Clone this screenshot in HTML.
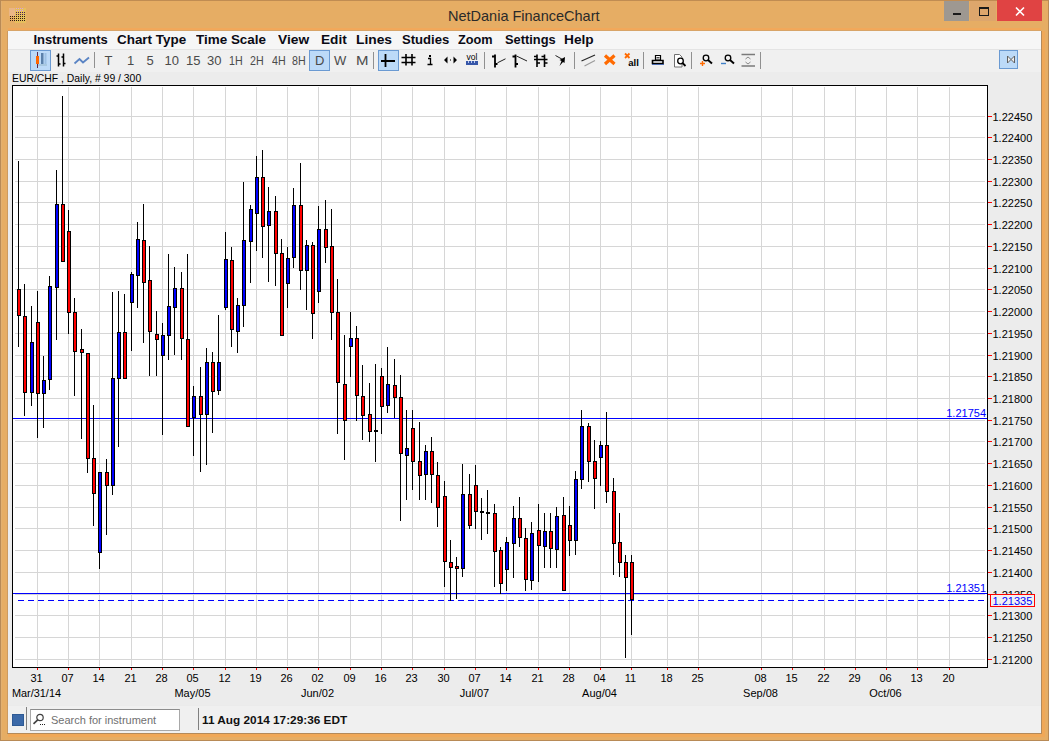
<!DOCTYPE html>
<html><head><meta charset="utf-8"><style>
html,body{margin:0;padding:0;}
body{width:1049px;height:741px;position:relative;overflow:hidden;background:#E6AD64;font-family:"Liberation Sans", sans-serif;}
.abs{position:absolute;}
.btn{background:#BCDAF8;border:1px solid #6A9AD2;}
.m{position:absolute;top:32px;font-size:13px;transform-origin:0 0;font-weight:bold;color:#0A0A14;line-height:16px;white-space:nowrap;}
.tt{position:absolute;top:53px;font-size:13px;color:#4A4A4A;transform-origin:0 0;line-height:15px;white-space:nowrap;}
svg text{font-family:"Liberation Sans", sans-serif;}
</style></head><body>
<div class="abs" style="left:0;top:0;width:1049px;height:1px;background:#C08C52"></div>
<div class="abs" style="left:0;top:0;width:1px;height:741px;background:#B88A56"></div>
<div class="abs" style="left:1px;top:1px;width:1px;height:740px;background:#E2B070"></div>
<div class="abs" style="left:1048px;top:0;width:1px;height:741px;background:#B88A56"></div>
<div class="abs" style="left:0;top:740px;width:1049px;height:1px;background:#B88A56"></div>
<div class="abs" style="left:7px;top:31px;width:1px;height:703px;background:#CC9A60"></div>
<div class="abs" style="left:1041px;top:31px;width:1px;height:703px;background:#B48A5A"></div>
<div class="abs" style="left:1042px;top:31px;width:3px;height:705px;background:#F0A858"></div>
<div class="abs" style="left:7px;top:733px;width:1035px;height:1px;background:#B48A5A"></div>
<div class="abs" style="left:8px;top:734px;width:1037px;height:3px;background:#F0A858"></div>
<div class="abs" style="left:8px;top:28px;width:1033px;height:2px;background:#F2A85A"></div>
<div class="abs" style="left:8px;top:30px;width:1033px;height:1px;background:#D8A468"></div>
<div class="abs" style="left:0;top:0;width:1049px;height:31px;">
  <span class="abs" style="left:448px;top:7px;font-size:14.5px;color:#2A2A2A;line-height:18px;white-space:nowrap">NetDania FinanceChart</span>
</div>
<!-- app icon -->
<svg class="abs" style="left:0;top:0" width="40" height="30">
  <rect x="15" y="8" width="11" height="15" fill="#E6C45A" opacity="0.7"/>
  <rect x="9" y="8" width="6" height="8" fill="#EBB890" opacity="0.8"/>
  <g fill="#2E1C12">
  <rect x="10" y="16" width="1" height="1"/><rect x="10" y="18" width="1" height="1"/><rect x="10" y="20" width="1" height="1"/><rect x="12" y="16" width="1" height="1"/><rect x="12" y="18" width="1" height="1"/><rect x="12" y="20" width="1" height="1"/><rect x="14" y="16" width="1" height="1"/><rect x="14" y="18" width="1" height="1"/><rect x="14" y="20" width="1" height="1"/><rect x="16" y="16" width="1" height="1"/><rect x="16" y="18" width="1" height="1"/><rect x="16" y="20" width="1" height="1"/><rect x="18" y="16" width="1" height="1"/><rect x="18" y="18" width="1" height="1"/><rect x="18" y="20" width="1" height="1"/><rect x="20" y="16" width="1" height="1"/><rect x="20" y="18" width="1" height="1"/><rect x="20" y="20" width="1" height="1"/><rect x="22" y="16" width="1" height="1"/><rect x="22" y="18" width="1" height="1"/><rect x="22" y="20" width="1" height="1"/><rect x="24" y="16" width="1" height="1"/><rect x="24" y="18" width="1" height="1"/><rect x="24" y="20" width="1" height="1"/>
  </g>
  <g fill="#4A2050">
  <rect x="16" y="12" width="1" height="1"/><rect x="16" y="14" width="1" height="1"/><rect x="18" y="12" width="1" height="1"/><rect x="18" y="14" width="1" height="1"/><rect x="20" y="12" width="1" height="1"/><rect x="20" y="14" width="1" height="1"/><rect x="22" y="12" width="1" height="1"/><rect x="22" y="14" width="1" height="1"/><rect x="24" y="12" width="1" height="1"/><rect x="24" y="14" width="1" height="1"/>
  </g>
  <g fill="#D8A0E8">
  <rect x="16" y="8" width="1" height="1"/><rect x="16" y="10" width="1" height="1"/><rect x="18" y="8" width="1" height="1"/><rect x="18" y="10" width="1" height="1"/><rect x="20" y="8" width="1" height="1"/><rect x="20" y="10" width="1" height="1"/><rect x="22" y="8" width="1" height="1"/><rect x="22" y="10" width="1" height="1"/>
  </g>
</svg>
<!-- title buttons -->
<div class="abs" style="left:944px;top:1px;width:25px;height:20px;background:#9E9891"></div>
<div class="abs" style="left:953px;top:13px;width:8px;height:2px;background:#1A1A1A"></div>
<div class="abs" style="left:970px;top:1px;width:26px;height:20px;background:#DDA66C"></div>
<div class="abs" style="left:979px;top:7px;width:8px;height:6px;border:1px solid #1A1A1A;border-top-width:2px"></div>
<div class="abs" style="left:997px;top:0px;width:45px;height:21px;background:#E04343"></div>
<svg class="abs" style="left:997px;top:0" width="45" height="21"><path d="M19 7.5l8 8M27 7.5l-8 8" stroke="#FFF" stroke-width="1.6"/></svg>
<!-- client -->
<div class="abs" style="left:8px;top:31px;width:1033px;height:702px;background:#F0F0F0"></div>
<div class="abs" style="left:8px;top:31px;width:1033px;height:18px;background:#F6F6F6"></div>
<div class="abs" style="left:8px;top:49px;width:1033px;height:1px;background:#E4E4E4"></div>
<div class="abs" style="left:8px;top:72px;width:1033px;height:633px;background:#ECECEC"></div>
<div class="abs" style="left:8px;top:705px;width:1033px;height:1px;background:#EBEBEB"></div>

<div class="abs btn" style="left:30px;top:50px;width:19px;height:19px"></div>
<div class="abs btn" style="left:309px;top:50px;width:19px;height:19px"></div>
<div class="abs btn" style="left:378px;top:50px;width:19px;height:19px"></div>
<div class="abs btn" style="left:999px;top:50px;width:17px;height:17px"></div>

<span class="m" style="left:33.4px;transform:scaleX(1.0)">Instruments</span><span class="m" style="left:116.7px;transform:scaleX(1.033)">Chart Type</span><span class="m" style="left:195.7px;transform:scaleX(1.035)">Time Scale</span><span class="m" style="left:278.3px;transform:scaleX(1.058)">View</span><span class="m" style="left:321.0px;transform:scaleX(1.049)">Edit</span><span class="m" style="left:356.3px;transform:scaleX(1.061)">Lines</span><span class="m" style="left:402.3px;transform:scaleX(1.008)">Studies</span><span class="m" style="left:458.3px;transform:scaleX(0.977)">Zoom</span><span class="m" style="left:504.7px;transform:scaleX(0.989)">Settings</span><span class="m" style="left:564.3px;transform:scaleX(1.052)">Help</span>
<span class="tt" style="left:104.5px;transform:scaleX(1)">T</span><span class="tt" style="left:127px;transform:scaleX(1)">1</span><span class="tt" style="left:146.5px;transform:scaleX(1)">5</span><span class="tt" style="left:164.5px;transform:scaleX(1)">10</span><span class="tt" style="left:186px;transform:scaleX(1)">15</span><span class="tt" style="left:207px;transform:scaleX(1)">30</span><span class="tt" style="left:229px;transform:scaleX(0.82)">1H</span><span class="tt" style="left:249.5px;transform:scaleX(0.82)">2H</span><span class="tt" style="left:271.5px;transform:scaleX(0.82)">4H</span><span class="tt" style="left:291.5px;transform:scaleX(0.82)">8H</span><span class="tt" style="left:315px;transform:scaleX(1)">D</span><span class="tt" style="left:334px;transform:scaleX(1)">W</span><span class="tt" style="left:355.8px;transform:scaleX(1.15)">M</span>
<svg class="abs" style="left:0;top:0" width="1049" height="90">
<!-- selected candle button -->
<path d="M37.5 52v16" stroke="#5A2A50" stroke-width="1"/>
<rect x="36" y="56" width="3" height="8" fill="#FF6600"/>
<rect x="41" y="53" width="2.5" height="11" fill="#5A80AA"/>
<rect x="44.5" y="53" width="2" height="11" fill="#9CC0E4"/>
<rect x="38" y="64" width="9" height="2" fill="#A8C8E0"/>
<!-- bar icon (OHLC pair) -->
<path d="M58.5 53.5v13M56.5 56h2M58.5 64h2M63.5 53.5v13M61.5 57h2M63.5 63.5h2" stroke="#000" stroke-width="1.5" fill="none"/>
<!-- line icon -->
<path d="M74.5 63.5l5-4.5 3.5 3.5 6-5" stroke="#5A84C4" stroke-width="1.8" fill="none"/>
<rect x="94" y="52" width="1" height="16" fill="#909090"/>
<rect x="373" y="52" width="1" height="17" fill="#909090"/>
<!-- crosshair -->
<path d="M381 61h14M385.5 54v13" stroke="#000" stroke-width="1.8" fill="none"/>
<!-- hash -->
<path d="M406 54v11.5M412 54v11.5M401.5 57.5h14M401.5 62.5h14" stroke="#000" stroke-width="1.6" fill="none"/>
<!-- i -->
<rect x="429" y="55" width="2" height="2" fill="#000"/>
<path d="M428 58.5h2.5v5.5M427.5 64.5h5" stroke="#000" stroke-width="1.3" fill="none"/>
<!-- arrows -->
<path d="M444 60l3.5-3.5v7zM457 60l-3.5-3.5v7z" fill="#000"/>
<rect x="450" y="59" width="1" height="2" fill="#707070"/>
<!-- vol -->
<text x="472" y="59.5" text-anchor="middle" font-size="8.5" fill="#000">vol</text>
<path d="M466 61h12v4h-12z" fill="#3656A8"/>
<path d="M468.5 61v2M471.5 61v2M474.5 61v2" stroke="#B8C8F0" stroke-width="1"/>
<rect x="484" y="52" width="1" height="17" fill="#909090"/>
<!-- trendline icons -->
<path d="M495 54.5v13M492 56.5h3M495 64h2.5" stroke="#000" stroke-width="1.8" fill="none"/>
<path d="M497.5 62.8l8-4" stroke="#202020" stroke-width="1" fill="none"/>
<path d="M515.5 54.5v13M512.5 56.5h3M515.5 64h2.5" stroke="#000" stroke-width="1.8" fill="none"/>
<path d="M516.5 56l10.5 5" stroke="#202020" stroke-width="1" fill="none"/>
<path d="M537 54.5v12.5M544.5 54.5v12.5M534 56.5h3M541.5 56.5h3M534 59.5h13.5M537 63h3M544.5 63h3" stroke="#000" stroke-width="1.6" fill="none"/>
<path d="M555.5 55.5l8 4.5" stroke="#202020" stroke-width="1" fill="none"/>
<path d="M559.5 66l2-5-2-1 5.5-3-0.5 6-1.5-1z" fill="#000"/>
<rect x="574" y="52" width="1" height="17" fill="#909090"/>
<path d="M581.5 61l13.5-6" stroke="#282828" stroke-width="1.2" fill="none"/>
<path d="M584.5 66l10.5-5.5" stroke="#9A9A9A" stroke-width="1.2" fill="none"/>
<!-- orange X -->
<path d="M605 55.5l9.5 8.5M614.5 55.5l-9.5 8.5" stroke="#FF6A00" stroke-width="3.2" fill="none"/>
<path d="M625 53.5l4.5 4.5M629.5 53.5l-4.5 4.5" stroke="#FF6A00" stroke-width="1.8" fill="none"/>
<text x="628.3" y="65.5" font-size="9.5" font-weight="bold" fill="#000">all</text>
<rect x="643" y="52" width="1" height="17" fill="#909090"/>
<!-- printer -->
<path d="M655.5 55.5h5v4.5h-5z" stroke="#000" stroke-width="1.2" fill="#fff"/>
<path d="M656.5 57.8h3" stroke="#000" stroke-width="1"/>
<path d="M652.5 60.5h10.5v3h-10.5z" stroke="#000" stroke-width="1.6" fill="#fff"/>
<rect x="652" y="64" width="12" height="1" fill="#4A6AB0"/>
<!-- print preview -->
<path d="M674.5 54.5h5l2.5 2.5v10h-7.5z" stroke="#707070" stroke-width="1" fill="#fff"/>
<circle cx="680.5" cy="61" r="2.8" stroke="#000" stroke-width="1.3" fill="#fff"/>
<path d="M682.5 63l3 3" stroke="#000" stroke-width="1.8"/>
<rect x="691" y="52" width="1" height="17" fill="#909090"/>
<!-- zoom in -->
<circle cx="706" cy="58" r="2.8" stroke="#000" stroke-width="1.3" fill="none"/>
<path d="M708 60l4 3.5" stroke="#000" stroke-width="1.9"/>
<path d="M702.5 61v5M700 63.5h5" stroke="#FF6A00" stroke-width="1.4"/>
<!-- zoom out -->
<circle cx="728" cy="58" r="2.8" stroke="#000" stroke-width="1.3" fill="none"/>
<path d="M730 60l4 3.5" stroke="#000" stroke-width="1.9"/>
<path d="M721 63.5h5" stroke="#4080C8" stroke-width="1.4"/>
<!-- fit -->
<path d="M741.5 54.5h13.5M741.5 66h13.5" stroke="#7A7A7A" stroke-width="1.7"/>
<path d="M745.5 59l2.5-2 2.5 2M745.5 62l2.5 2 2.5-2" stroke="#8A8A8A" stroke-width="1" fill="none"/>
<rect x="760" y="52" width="1" height="17" fill="#909090"/>
<!-- right button icon -->
<path d="M1007.5 56v7l3.5-3.5zM1014.5 56v7l-3.5-3.5z" stroke="#606060" stroke-width="1" fill="#F0F0F0"/>
</svg>
<span class="abs" style="left:12px;top:72px;font-size:10.4px;color:#000;line-height:13px;white-space:nowrap">EUR/CHF , Daily, # 99 / 300</span>
<svg class="abs" style="left:0;top:0" width="1049" height="705" shape-rendering="crispEdges">
<rect x="12" y="85" width="976" height="583" fill="#FFFFFF"/>
<rect x="15" y="116" width="970" height="1" fill="#D6D6D6"/>
<rect x="15" y="137" width="970" height="1" fill="#D6D6D6"/>
<rect x="15" y="159" width="970" height="1" fill="#D6D6D6"/>
<rect x="15" y="181" width="970" height="1" fill="#D6D6D6"/>
<rect x="15" y="202" width="970" height="1" fill="#D6D6D6"/>
<rect x="15" y="224" width="970" height="1" fill="#D6D6D6"/>
<rect x="15" y="246" width="970" height="1" fill="#D6D6D6"/>
<rect x="15" y="268" width="970" height="1" fill="#D6D6D6"/>
<rect x="15" y="289" width="970" height="1" fill="#D6D6D6"/>
<rect x="15" y="311" width="970" height="1" fill="#D6D6D6"/>
<rect x="15" y="333" width="970" height="1" fill="#D6D6D6"/>
<rect x="15" y="355" width="970" height="1" fill="#D6D6D6"/>
<rect x="15" y="376" width="970" height="1" fill="#D6D6D6"/>
<rect x="15" y="398" width="970" height="1" fill="#D6D6D6"/>
<rect x="15" y="420" width="970" height="1" fill="#D6D6D6"/>
<rect x="15" y="441" width="970" height="1" fill="#D6D6D6"/>
<rect x="15" y="463" width="970" height="1" fill="#D6D6D6"/>
<rect x="15" y="485" width="970" height="1" fill="#D6D6D6"/>
<rect x="15" y="507" width="970" height="1" fill="#D6D6D6"/>
<rect x="15" y="528" width="970" height="1" fill="#D6D6D6"/>
<rect x="15" y="550" width="970" height="1" fill="#D6D6D6"/>
<rect x="15" y="572" width="970" height="1" fill="#D6D6D6"/>
<rect x="15" y="594" width="970" height="1" fill="#D6D6D6"/>
<rect x="15" y="615" width="970" height="1" fill="#D6D6D6"/>
<rect x="15" y="637" width="970" height="1" fill="#D6D6D6"/>
<rect x="15" y="659" width="970" height="1" fill="#D6D6D6"/>
<rect x="37" y="87" width="1" height="579" fill="#D6D6D6"/>
<rect x="68" y="87" width="1" height="579" fill="#D6D6D6"/>
<rect x="99" y="87" width="1" height="579" fill="#D6D6D6"/>
<rect x="131" y="87" width="1" height="579" fill="#D6D6D6"/>
<rect x="162" y="87" width="1" height="579" fill="#D6D6D6"/>
<rect x="193" y="87" width="1" height="579" fill="#D6D6D6"/>
<rect x="225" y="87" width="1" height="579" fill="#D6D6D6"/>
<rect x="256" y="87" width="1" height="579" fill="#D6D6D6"/>
<rect x="287" y="87" width="1" height="579" fill="#D6D6D6"/>
<rect x="318" y="87" width="1" height="579" fill="#D6D6D6"/>
<rect x="350" y="87" width="1" height="579" fill="#D6D6D6"/>
<rect x="381" y="87" width="1" height="579" fill="#D6D6D6"/>
<rect x="412" y="87" width="1" height="579" fill="#D6D6D6"/>
<rect x="444" y="87" width="1" height="579" fill="#D6D6D6"/>
<rect x="475" y="87" width="1" height="579" fill="#D6D6D6"/>
<rect x="506" y="87" width="1" height="579" fill="#D6D6D6"/>
<rect x="538" y="87" width="1" height="579" fill="#D6D6D6"/>
<rect x="569" y="87" width="1" height="579" fill="#D6D6D6"/>
<rect x="600" y="87" width="1" height="579" fill="#D6D6D6"/>
<rect x="631" y="87" width="1" height="579" fill="#D6D6D6"/>
<rect x="667" y="87" width="1" height="579" fill="#D6D6D6"/>
<rect x="698" y="87" width="1" height="579" fill="#D6D6D6"/>
<rect x="761" y="87" width="1" height="579" fill="#D6D6D6"/>
<rect x="792" y="87" width="1" height="579" fill="#D6D6D6"/>
<rect x="824" y="87" width="1" height="579" fill="#D6D6D6"/>
<rect x="855" y="87" width="1" height="579" fill="#D6D6D6"/>
<rect x="886" y="87" width="1" height="579" fill="#D6D6D6"/>
<rect x="917" y="87" width="1" height="579" fill="#D6D6D6"/>
<rect x="949" y="87" width="1" height="579" fill="#D6D6D6"/>
<rect x="13" y="418" width="974" height="1" fill="#0000FF"/>
<rect x="13" y="593" width="974" height="1" fill="#0000FF"/>
<rect x="18" y="600" width="6" height="1" fill="#0000FF"/>
<rect x="28" y="600" width="6" height="1" fill="#0000FF"/>
<rect x="38" y="600" width="6" height="1" fill="#0000FF"/>
<rect x="48" y="600" width="6" height="1" fill="#0000FF"/>
<rect x="58" y="600" width="6" height="1" fill="#0000FF"/>
<rect x="68" y="600" width="6" height="1" fill="#0000FF"/>
<rect x="78" y="600" width="6" height="1" fill="#0000FF"/>
<rect x="88" y="600" width="6" height="1" fill="#0000FF"/>
<rect x="98" y="600" width="6" height="1" fill="#0000FF"/>
<rect x="108" y="600" width="6" height="1" fill="#0000FF"/>
<rect x="118" y="600" width="6" height="1" fill="#0000FF"/>
<rect x="128" y="600" width="6" height="1" fill="#0000FF"/>
<rect x="138" y="600" width="6" height="1" fill="#0000FF"/>
<rect x="148" y="600" width="6" height="1" fill="#0000FF"/>
<rect x="158" y="600" width="6" height="1" fill="#0000FF"/>
<rect x="168" y="600" width="6" height="1" fill="#0000FF"/>
<rect x="178" y="600" width="6" height="1" fill="#0000FF"/>
<rect x="188" y="600" width="6" height="1" fill="#0000FF"/>
<rect x="198" y="600" width="6" height="1" fill="#0000FF"/>
<rect x="208" y="600" width="6" height="1" fill="#0000FF"/>
<rect x="218" y="600" width="6" height="1" fill="#0000FF"/>
<rect x="228" y="600" width="6" height="1" fill="#0000FF"/>
<rect x="238" y="600" width="6" height="1" fill="#0000FF"/>
<rect x="248" y="600" width="6" height="1" fill="#0000FF"/>
<rect x="258" y="600" width="6" height="1" fill="#0000FF"/>
<rect x="268" y="600" width="6" height="1" fill="#0000FF"/>
<rect x="278" y="600" width="6" height="1" fill="#0000FF"/>
<rect x="288" y="600" width="6" height="1" fill="#0000FF"/>
<rect x="298" y="600" width="6" height="1" fill="#0000FF"/>
<rect x="308" y="600" width="6" height="1" fill="#0000FF"/>
<rect x="318" y="600" width="6" height="1" fill="#0000FF"/>
<rect x="328" y="600" width="6" height="1" fill="#0000FF"/>
<rect x="338" y="600" width="6" height="1" fill="#0000FF"/>
<rect x="348" y="600" width="6" height="1" fill="#0000FF"/>
<rect x="358" y="600" width="6" height="1" fill="#0000FF"/>
<rect x="368" y="600" width="6" height="1" fill="#0000FF"/>
<rect x="378" y="600" width="6" height="1" fill="#0000FF"/>
<rect x="388" y="600" width="6" height="1" fill="#0000FF"/>
<rect x="398" y="600" width="6" height="1" fill="#0000FF"/>
<rect x="408" y="600" width="6" height="1" fill="#0000FF"/>
<rect x="418" y="600" width="6" height="1" fill="#0000FF"/>
<rect x="428" y="600" width="6" height="1" fill="#0000FF"/>
<rect x="438" y="600" width="6" height="1" fill="#0000FF"/>
<rect x="448" y="600" width="6" height="1" fill="#0000FF"/>
<rect x="458" y="600" width="6" height="1" fill="#0000FF"/>
<rect x="468" y="600" width="6" height="1" fill="#0000FF"/>
<rect x="478" y="600" width="6" height="1" fill="#0000FF"/>
<rect x="488" y="600" width="6" height="1" fill="#0000FF"/>
<rect x="498" y="600" width="6" height="1" fill="#0000FF"/>
<rect x="508" y="600" width="6" height="1" fill="#0000FF"/>
<rect x="518" y="600" width="6" height="1" fill="#0000FF"/>
<rect x="528" y="600" width="6" height="1" fill="#0000FF"/>
<rect x="538" y="600" width="6" height="1" fill="#0000FF"/>
<rect x="548" y="600" width="6" height="1" fill="#0000FF"/>
<rect x="558" y="600" width="6" height="1" fill="#0000FF"/>
<rect x="568" y="600" width="6" height="1" fill="#0000FF"/>
<rect x="578" y="600" width="6" height="1" fill="#0000FF"/>
<rect x="588" y="600" width="6" height="1" fill="#0000FF"/>
<rect x="598" y="600" width="6" height="1" fill="#0000FF"/>
<rect x="608" y="600" width="6" height="1" fill="#0000FF"/>
<rect x="618" y="600" width="6" height="1" fill="#0000FF"/>
<rect x="628" y="600" width="6" height="1" fill="#0000FF"/>
<rect x="638" y="600" width="6" height="1" fill="#0000FF"/>
<rect x="648" y="600" width="6" height="1" fill="#0000FF"/>
<rect x="658" y="600" width="6" height="1" fill="#0000FF"/>
<rect x="668" y="600" width="6" height="1" fill="#0000FF"/>
<rect x="678" y="600" width="6" height="1" fill="#0000FF"/>
<rect x="688" y="600" width="6" height="1" fill="#0000FF"/>
<rect x="698" y="600" width="6" height="1" fill="#0000FF"/>
<rect x="708" y="600" width="6" height="1" fill="#0000FF"/>
<rect x="718" y="600" width="6" height="1" fill="#0000FF"/>
<rect x="728" y="600" width="6" height="1" fill="#0000FF"/>
<rect x="738" y="600" width="6" height="1" fill="#0000FF"/>
<rect x="748" y="600" width="6" height="1" fill="#0000FF"/>
<rect x="758" y="600" width="6" height="1" fill="#0000FF"/>
<rect x="768" y="600" width="6" height="1" fill="#0000FF"/>
<rect x="778" y="600" width="6" height="1" fill="#0000FF"/>
<rect x="788" y="600" width="6" height="1" fill="#0000FF"/>
<rect x="798" y="600" width="6" height="1" fill="#0000FF"/>
<rect x="808" y="600" width="6" height="1" fill="#0000FF"/>
<rect x="818" y="600" width="6" height="1" fill="#0000FF"/>
<rect x="828" y="600" width="6" height="1" fill="#0000FF"/>
<rect x="838" y="600" width="6" height="1" fill="#0000FF"/>
<rect x="848" y="600" width="6" height="1" fill="#0000FF"/>
<rect x="858" y="600" width="6" height="1" fill="#0000FF"/>
<rect x="868" y="600" width="6" height="1" fill="#0000FF"/>
<rect x="878" y="600" width="6" height="1" fill="#0000FF"/>
<rect x="888" y="600" width="6" height="1" fill="#0000FF"/>
<rect x="898" y="600" width="6" height="1" fill="#0000FF"/>
<rect x="908" y="600" width="6" height="1" fill="#0000FF"/>
<rect x="918" y="600" width="6" height="1" fill="#0000FF"/>
<rect x="928" y="600" width="6" height="1" fill="#0000FF"/>
<rect x="938" y="600" width="6" height="1" fill="#0000FF"/>
<rect x="948" y="600" width="6" height="1" fill="#0000FF"/>
<rect x="958" y="600" width="6" height="1" fill="#0000FF"/>
<rect x="968" y="600" width="6" height="1" fill="#0000FF"/>
<rect x="978" y="600" width="6" height="1" fill="#0000FF"/>
<rect x="18" y="161" width="1" height="186" fill="#000"/>
<rect x="17" y="289" width="4" height="27" fill="#000"/>
<rect x="18" y="290" width="2" height="25" fill="#FF0000"/>
<rect x="24" y="284" width="1" height="132" fill="#000"/>
<rect x="23" y="316" width="4" height="77" fill="#000"/>
<rect x="24" y="317" width="2" height="75" fill="#FF0000"/>
<rect x="31" y="306" width="1" height="100" fill="#000"/>
<rect x="30" y="342" width="4" height="51" fill="#000"/>
<rect x="31" y="343" width="2" height="49" fill="#0000FF"/>
<rect x="37" y="291" width="1" height="147" fill="#000"/>
<rect x="36" y="322" width="4" height="72" fill="#000"/>
<rect x="37" y="323" width="2" height="70" fill="#FF0000"/>
<rect x="43" y="356" width="1" height="72" fill="#000"/>
<rect x="42" y="380" width="4" height="14" fill="#000"/>
<rect x="43" y="381" width="2" height="12" fill="#0000FF"/>
<rect x="49" y="276" width="1" height="114" fill="#000"/>
<rect x="48" y="286" width="4" height="94" fill="#000"/>
<rect x="49" y="287" width="2" height="92" fill="#0000FF"/>
<rect x="56" y="170" width="1" height="170" fill="#000"/>
<rect x="55" y="204" width="4" height="84" fill="#000"/>
<rect x="56" y="205" width="2" height="82" fill="#0000FF"/>
<rect x="62" y="96" width="1" height="166" fill="#000"/>
<rect x="61" y="204" width="4" height="58" fill="#000"/>
<rect x="62" y="205" width="2" height="56" fill="#FF0000"/>
<rect x="68" y="210" width="1" height="124" fill="#000"/>
<rect x="67" y="231" width="4" height="82" fill="#000"/>
<rect x="68" y="232" width="2" height="80" fill="#FF0000"/>
<rect x="74" y="298" width="1" height="98" fill="#000"/>
<rect x="73" y="312" width="4" height="40" fill="#000"/>
<rect x="74" y="313" width="2" height="38" fill="#FF0000"/>
<rect x="81" y="329" width="1" height="110" fill="#000"/>
<rect x="80" y="349" width="4" height="4" fill="#000"/>
<rect x="81" y="350" width="2" height="2" fill="#FF0000"/>
<rect x="87" y="353" width="1" height="120" fill="#000"/>
<rect x="86" y="353" width="4" height="106" fill="#000"/>
<rect x="87" y="354" width="2" height="104" fill="#FF0000"/>
<rect x="93" y="405" width="1" height="121" fill="#000"/>
<rect x="92" y="458" width="4" height="36" fill="#000"/>
<rect x="93" y="459" width="2" height="34" fill="#FF0000"/>
<rect x="99" y="472" width="1" height="97" fill="#000"/>
<rect x="98" y="472" width="4" height="81" fill="#000"/>
<rect x="99" y="473" width="2" height="79" fill="#0000FF"/>
<rect x="106" y="459" width="1" height="76" fill="#000"/>
<rect x="105" y="472" width="4" height="14" fill="#000"/>
<rect x="106" y="473" width="2" height="12" fill="#FF0000"/>
<rect x="112" y="292" width="1" height="203" fill="#000"/>
<rect x="111" y="378" width="4" height="108" fill="#000"/>
<rect x="112" y="379" width="2" height="106" fill="#0000FF"/>
<rect x="118" y="291" width="1" height="156" fill="#000"/>
<rect x="117" y="332" width="4" height="47" fill="#000"/>
<rect x="118" y="333" width="2" height="45" fill="#0000FF"/>
<rect x="124" y="294" width="1" height="85" fill="#000"/>
<rect x="123" y="332" width="4" height="47" fill="#000"/>
<rect x="124" y="333" width="2" height="45" fill="#FF0000"/>
<rect x="131" y="272" width="1" height="79" fill="#000"/>
<rect x="130" y="274" width="4" height="29" fill="#000"/>
<rect x="131" y="275" width="2" height="27" fill="#0000FF"/>
<rect x="137" y="222" width="1" height="86" fill="#000"/>
<rect x="136" y="239" width="4" height="37" fill="#000"/>
<rect x="137" y="240" width="2" height="35" fill="#0000FF"/>
<rect x="143" y="204" width="1" height="139" fill="#000"/>
<rect x="142" y="240" width="4" height="43" fill="#000"/>
<rect x="143" y="241" width="2" height="41" fill="#FF0000"/>
<rect x="149" y="246" width="1" height="130" fill="#000"/>
<rect x="148" y="280" width="4" height="52" fill="#000"/>
<rect x="149" y="281" width="2" height="50" fill="#FF0000"/>
<rect x="156" y="311" width="1" height="65" fill="#000"/>
<rect x="155" y="334" width="4" height="6" fill="#000"/>
<rect x="156" y="335" width="2" height="4" fill="#FF0000"/>
<rect x="162" y="323" width="1" height="112" fill="#000"/>
<rect x="161" y="335" width="4" height="21" fill="#000"/>
<rect x="162" y="336" width="2" height="19" fill="#0000FF"/>
<rect x="168" y="254" width="1" height="106" fill="#000"/>
<rect x="167" y="306" width="4" height="30" fill="#000"/>
<rect x="168" y="307" width="2" height="28" fill="#0000FF"/>
<rect x="174" y="267" width="1" height="88" fill="#000"/>
<rect x="173" y="288" width="4" height="20" fill="#000"/>
<rect x="174" y="289" width="2" height="18" fill="#0000FF"/>
<rect x="181" y="272" width="1" height="88" fill="#000"/>
<rect x="180" y="288" width="4" height="51" fill="#000"/>
<rect x="181" y="289" width="2" height="49" fill="#FF0000"/>
<rect x="187" y="254" width="1" height="173" fill="#000"/>
<rect x="186" y="339" width="4" height="88" fill="#000"/>
<rect x="187" y="340" width="2" height="86" fill="#FF0000"/>
<rect x="193" y="386" width="1" height="70" fill="#000"/>
<rect x="192" y="396" width="4" height="22" fill="#000"/>
<rect x="193" y="397" width="2" height="20" fill="#0000FF"/>
<rect x="200" y="367" width="1" height="105" fill="#000"/>
<rect x="199" y="396" width="4" height="19" fill="#000"/>
<rect x="200" y="397" width="2" height="17" fill="#FF0000"/>
<rect x="206" y="348" width="1" height="117" fill="#000"/>
<rect x="205" y="362" width="4" height="53" fill="#000"/>
<rect x="206" y="363" width="2" height="51" fill="#0000FF"/>
<rect x="212" y="352" width="1" height="81" fill="#000"/>
<rect x="211" y="362" width="4" height="30" fill="#000"/>
<rect x="212" y="363" width="2" height="28" fill="#FF0000"/>
<rect x="218" y="315" width="1" height="80" fill="#000"/>
<rect x="217" y="362" width="4" height="29" fill="#000"/>
<rect x="218" y="363" width="2" height="27" fill="#0000FF"/>
<rect x="225" y="232" width="1" height="78" fill="#000"/>
<rect x="224" y="259" width="4" height="49" fill="#000"/>
<rect x="225" y="260" width="2" height="47" fill="#0000FF"/>
<rect x="231" y="247" width="1" height="100" fill="#000"/>
<rect x="230" y="260" width="4" height="70" fill="#000"/>
<rect x="231" y="261" width="2" height="68" fill="#FF0000"/>
<rect x="237" y="298" width="1" height="55" fill="#000"/>
<rect x="236" y="305" width="4" height="27" fill="#000"/>
<rect x="237" y="306" width="2" height="25" fill="#0000FF"/>
<rect x="243" y="182" width="1" height="145" fill="#000"/>
<rect x="242" y="240" width="4" height="66" fill="#000"/>
<rect x="243" y="241" width="2" height="64" fill="#0000FF"/>
<rect x="250" y="205" width="1" height="78" fill="#000"/>
<rect x="249" y="209" width="4" height="33" fill="#000"/>
<rect x="250" y="210" width="2" height="31" fill="#0000FF"/>
<rect x="256" y="156" width="1" height="95" fill="#000"/>
<rect x="255" y="177" width="4" height="37" fill="#000"/>
<rect x="256" y="178" width="2" height="35" fill="#0000FF"/>
<rect x="262" y="150" width="1" height="108" fill="#000"/>
<rect x="261" y="177" width="4" height="50" fill="#000"/>
<rect x="262" y="178" width="2" height="48" fill="#FF0000"/>
<rect x="268" y="187" width="1" height="95" fill="#000"/>
<rect x="267" y="211" width="4" height="15" fill="#000"/>
<rect x="268" y="212" width="2" height="13" fill="#0000FF"/>
<rect x="275" y="196" width="1" height="90" fill="#000"/>
<rect x="274" y="211" width="4" height="43" fill="#000"/>
<rect x="275" y="212" width="2" height="41" fill="#FF0000"/>
<rect x="281" y="239" width="1" height="97" fill="#000"/>
<rect x="280" y="253" width="4" height="83" fill="#000"/>
<rect x="281" y="254" width="2" height="81" fill="#FF0000"/>
<rect x="287" y="247" width="1" height="61" fill="#000"/>
<rect x="286" y="258" width="4" height="26" fill="#000"/>
<rect x="287" y="259" width="2" height="24" fill="#0000FF"/>
<rect x="293" y="188" width="1" height="80" fill="#000"/>
<rect x="292" y="205" width="4" height="53" fill="#000"/>
<rect x="293" y="206" width="2" height="51" fill="#0000FF"/>
<rect x="300" y="163" width="1" height="127" fill="#000"/>
<rect x="299" y="205" width="4" height="66" fill="#000"/>
<rect x="300" y="206" width="2" height="64" fill="#FF0000"/>
<rect x="306" y="240" width="1" height="70" fill="#000"/>
<rect x="305" y="245" width="4" height="26" fill="#000"/>
<rect x="306" y="246" width="2" height="24" fill="#0000FF"/>
<rect x="312" y="242" width="1" height="97" fill="#000"/>
<rect x="311" y="245" width="4" height="69" fill="#000"/>
<rect x="312" y="246" width="2" height="67" fill="#FF0000"/>
<rect x="318" y="206" width="1" height="97" fill="#000"/>
<rect x="317" y="229" width="4" height="63" fill="#000"/>
<rect x="318" y="230" width="2" height="61" fill="#0000FF"/>
<rect x="325" y="200" width="1" height="63" fill="#000"/>
<rect x="324" y="229" width="4" height="19" fill="#000"/>
<rect x="325" y="230" width="2" height="17" fill="#FF0000"/>
<rect x="331" y="209" width="1" height="131" fill="#000"/>
<rect x="330" y="246" width="4" height="67" fill="#000"/>
<rect x="331" y="247" width="2" height="65" fill="#FF0000"/>
<rect x="337" y="279" width="1" height="155" fill="#000"/>
<rect x="336" y="312" width="4" height="71" fill="#000"/>
<rect x="337" y="313" width="2" height="69" fill="#FF0000"/>
<rect x="344" y="335" width="1" height="125" fill="#000"/>
<rect x="343" y="384" width="4" height="37" fill="#000"/>
<rect x="344" y="385" width="2" height="35" fill="#FF0000"/>
<rect x="350" y="312" width="1" height="65" fill="#000"/>
<rect x="349" y="338" width="4" height="9" fill="#000"/>
<rect x="350" y="339" width="2" height="7" fill="#0000FF"/>
<rect x="356" y="326" width="1" height="95" fill="#000"/>
<rect x="355" y="338" width="4" height="58" fill="#000"/>
<rect x="356" y="339" width="2" height="56" fill="#FF0000"/>
<rect x="362" y="365" width="1" height="75" fill="#000"/>
<rect x="361" y="396" width="4" height="20" fill="#000"/>
<rect x="362" y="397" width="2" height="18" fill="#FF0000"/>
<rect x="369" y="383" width="1" height="59" fill="#000"/>
<rect x="368" y="414" width="4" height="18" fill="#000"/>
<rect x="369" y="415" width="2" height="16" fill="#FF0000"/>
<rect x="375" y="364" width="1" height="98" fill="#000"/>
<rect x="374" y="430" width="4" height="2" fill="#000"/>
<rect x="381" y="368" width="1" height="66" fill="#000"/>
<rect x="380" y="376" width="4" height="31" fill="#000"/>
<rect x="381" y="377" width="2" height="29" fill="#FF0000"/>
<rect x="387" y="347" width="1" height="66" fill="#000"/>
<rect x="386" y="384" width="4" height="22" fill="#000"/>
<rect x="387" y="385" width="2" height="20" fill="#0000FF"/>
<rect x="394" y="359" width="1" height="59" fill="#000"/>
<rect x="393" y="385" width="4" height="13" fill="#000"/>
<rect x="394" y="386" width="2" height="11" fill="#FF0000"/>
<rect x="400" y="375" width="1" height="146" fill="#000"/>
<rect x="399" y="397" width="4" height="57" fill="#000"/>
<rect x="400" y="398" width="2" height="55" fill="#FF0000"/>
<rect x="406" y="410" width="1" height="90" fill="#000"/>
<rect x="405" y="448" width="4" height="8" fill="#000"/>
<rect x="406" y="449" width="2" height="6" fill="#0000FF"/>
<rect x="412" y="410" width="1" height="80" fill="#000"/>
<rect x="411" y="428" width="4" height="34" fill="#000"/>
<rect x="412" y="429" width="2" height="32" fill="#FF0000"/>
<rect x="419" y="422" width="1" height="78" fill="#000"/>
<rect x="418" y="461" width="4" height="15" fill="#000"/>
<rect x="419" y="462" width="2" height="13" fill="#FF0000"/>
<rect x="425" y="445" width="1" height="55" fill="#000"/>
<rect x="424" y="451" width="4" height="24" fill="#000"/>
<rect x="425" y="452" width="2" height="22" fill="#0000FF"/>
<rect x="431" y="437" width="1" height="66" fill="#000"/>
<rect x="430" y="451" width="4" height="24" fill="#000"/>
<rect x="431" y="452" width="2" height="22" fill="#FF0000"/>
<rect x="437" y="462" width="1" height="65" fill="#000"/>
<rect x="436" y="475" width="4" height="33" fill="#000"/>
<rect x="437" y="476" width="2" height="31" fill="#FF0000"/>
<rect x="444" y="481" width="1" height="106" fill="#000"/>
<rect x="443" y="496" width="4" height="66" fill="#000"/>
<rect x="444" y="497" width="2" height="64" fill="#FF0000"/>
<rect x="450" y="540" width="1" height="61" fill="#000"/>
<rect x="449" y="562" width="4" height="6" fill="#000"/>
<rect x="450" y="563" width="2" height="4" fill="#FF0000"/>
<rect x="456" y="557" width="1" height="42" fill="#000"/>
<rect x="455" y="566" width="4" height="3" fill="#000"/>
<rect x="456" y="567" width="2" height="1" fill="#FF0000"/>
<rect x="462" y="464" width="1" height="113" fill="#000"/>
<rect x="461" y="494" width="4" height="75" fill="#000"/>
<rect x="462" y="495" width="2" height="73" fill="#0000FF"/>
<rect x="469" y="474" width="1" height="55" fill="#000"/>
<rect x="468" y="494" width="4" height="32" fill="#000"/>
<rect x="469" y="495" width="2" height="30" fill="#FF0000"/>
<rect x="475" y="465" width="1" height="64" fill="#000"/>
<rect x="474" y="485" width="4" height="27" fill="#000"/>
<rect x="475" y="486" width="2" height="25" fill="#FF0000"/>
<rect x="481" y="498" width="1" height="42" fill="#000"/>
<rect x="480" y="511" width="4" height="2" fill="#000"/>
<rect x="487" y="490" width="1" height="44" fill="#000"/>
<rect x="486" y="512" width="4" height="2" fill="#000"/>
<rect x="494" y="504" width="1" height="83" fill="#000"/>
<rect x="493" y="513" width="4" height="39" fill="#000"/>
<rect x="494" y="514" width="2" height="37" fill="#FF0000"/>
<rect x="500" y="547" width="1" height="47" fill="#000"/>
<rect x="499" y="550" width="4" height="34" fill="#000"/>
<rect x="500" y="551" width="2" height="32" fill="#FF0000"/>
<rect x="506" y="537" width="1" height="54" fill="#000"/>
<rect x="505" y="542" width="4" height="28" fill="#000"/>
<rect x="506" y="543" width="2" height="26" fill="#0000FF"/>
<rect x="513" y="506" width="1" height="72" fill="#000"/>
<rect x="512" y="518" width="4" height="26" fill="#000"/>
<rect x="513" y="519" width="2" height="24" fill="#0000FF"/>
<rect x="519" y="497" width="1" height="50" fill="#000"/>
<rect x="518" y="518" width="4" height="20" fill="#000"/>
<rect x="519" y="519" width="2" height="18" fill="#FF0000"/>
<rect x="525" y="528" width="1" height="63" fill="#000"/>
<rect x="524" y="538" width="4" height="42" fill="#000"/>
<rect x="525" y="539" width="2" height="40" fill="#FF0000"/>
<rect x="531" y="522" width="1" height="68" fill="#000"/>
<rect x="530" y="533" width="4" height="48" fill="#000"/>
<rect x="531" y="534" width="2" height="46" fill="#0000FF"/>
<rect x="538" y="504" width="1" height="78" fill="#000"/>
<rect x="537" y="530" width="4" height="16" fill="#000"/>
<rect x="538" y="531" width="2" height="14" fill="#FF0000"/>
<rect x="544" y="513" width="1" height="55" fill="#000"/>
<rect x="543" y="531" width="4" height="16" fill="#000"/>
<rect x="544" y="532" width="2" height="14" fill="#0000FF"/>
<rect x="550" y="513" width="1" height="55" fill="#000"/>
<rect x="549" y="531" width="4" height="18" fill="#000"/>
<rect x="550" y="532" width="2" height="16" fill="#FF0000"/>
<rect x="556" y="507" width="1" height="61" fill="#000"/>
<rect x="555" y="516" width="4" height="34" fill="#000"/>
<rect x="556" y="517" width="2" height="32" fill="#0000FF"/>
<rect x="563" y="497" width="1" height="94" fill="#000"/>
<rect x="562" y="515" width="4" height="76" fill="#000"/>
<rect x="563" y="516" width="2" height="74" fill="#FF0000"/>
<rect x="569" y="506" width="1" height="50" fill="#000"/>
<rect x="568" y="525" width="4" height="16" fill="#000"/>
<rect x="569" y="526" width="2" height="14" fill="#FF0000"/>
<rect x="575" y="471" width="1" height="84" fill="#000"/>
<rect x="574" y="479" width="4" height="62" fill="#000"/>
<rect x="575" y="480" width="2" height="60" fill="#0000FF"/>
<rect x="581" y="410" width="1" height="79" fill="#000"/>
<rect x="580" y="426" width="4" height="54" fill="#000"/>
<rect x="581" y="427" width="2" height="52" fill="#0000FF"/>
<rect x="588" y="423" width="1" height="59" fill="#000"/>
<rect x="587" y="426" width="4" height="36" fill="#000"/>
<rect x="588" y="427" width="2" height="34" fill="#FF0000"/>
<rect x="594" y="440" width="1" height="69" fill="#000"/>
<rect x="593" y="461" width="4" height="18" fill="#000"/>
<rect x="594" y="462" width="2" height="16" fill="#FF0000"/>
<rect x="600" y="441" width="1" height="45" fill="#000"/>
<rect x="599" y="445" width="4" height="13" fill="#000"/>
<rect x="600" y="446" width="2" height="11" fill="#0000FF"/>
<rect x="606" y="412" width="1" height="91" fill="#000"/>
<rect x="605" y="445" width="4" height="47" fill="#000"/>
<rect x="606" y="446" width="2" height="45" fill="#FF0000"/>
<rect x="613" y="478" width="1" height="97" fill="#000"/>
<rect x="612" y="491" width="4" height="53" fill="#000"/>
<rect x="613" y="492" width="2" height="51" fill="#FF0000"/>
<rect x="619" y="513" width="1" height="64" fill="#000"/>
<rect x="618" y="542" width="4" height="21" fill="#000"/>
<rect x="619" y="543" width="2" height="19" fill="#FF0000"/>
<rect x="625" y="555" width="1" height="103" fill="#000"/>
<rect x="624" y="562" width="4" height="16" fill="#000"/>
<rect x="625" y="563" width="2" height="14" fill="#FF0000"/>
<rect x="631" y="555" width="1" height="80" fill="#000"/>
<rect x="630" y="562" width="4" height="38" fill="#000"/>
<rect x="631" y="563" width="2" height="36" fill="#FF0000"/>
<rect x="12.5" y="85.5" width="975" height="582" fill="none" stroke="#000" stroke-width="1"/>
<text x="986" y="417" text-anchor="end" font-size="11" fill="#0000FF">1.21754</text>
<text x="986" y="592" text-anchor="end" font-size="11" fill="#0000FF">1.21351</text>
<rect x="988" y="116" width="4" height="1" fill="#FF0000"/>
<text x="992.5" y="120.5" font-size="11" fill="#000">1.22450</text>
<rect x="988" y="137" width="4" height="1" fill="#FF0000"/>
<text x="992.5" y="141.5" font-size="11" fill="#000">1.22400</text>
<rect x="988" y="159" width="4" height="1" fill="#FF0000"/>
<text x="992.5" y="163.5" font-size="11" fill="#000">1.22350</text>
<rect x="988" y="181" width="4" height="1" fill="#FF0000"/>
<text x="992.5" y="185.5" font-size="11" fill="#000">1.22300</text>
<rect x="988" y="202" width="4" height="1" fill="#FF0000"/>
<text x="992.5" y="206.5" font-size="11" fill="#000">1.22250</text>
<rect x="988" y="224" width="4" height="1" fill="#FF0000"/>
<text x="992.5" y="228.5" font-size="11" fill="#000">1.22200</text>
<rect x="988" y="246" width="4" height="1" fill="#FF0000"/>
<text x="992.5" y="250.5" font-size="11" fill="#000">1.22150</text>
<rect x="988" y="268" width="4" height="1" fill="#FF0000"/>
<text x="992.5" y="272.5" font-size="11" fill="#000">1.22100</text>
<rect x="988" y="289" width="4" height="1" fill="#FF0000"/>
<text x="992.5" y="293.5" font-size="11" fill="#000">1.22050</text>
<rect x="988" y="311" width="4" height="1" fill="#FF0000"/>
<text x="992.5" y="315.5" font-size="11" fill="#000">1.22000</text>
<rect x="988" y="333" width="4" height="1" fill="#FF0000"/>
<text x="992.5" y="337.5" font-size="11" fill="#000">1.21950</text>
<rect x="988" y="355" width="4" height="1" fill="#FF0000"/>
<text x="992.5" y="359.5" font-size="11" fill="#000">1.21900</text>
<rect x="988" y="376" width="4" height="1" fill="#FF0000"/>
<text x="992.5" y="380.5" font-size="11" fill="#000">1.21850</text>
<rect x="988" y="398" width="4" height="1" fill="#FF0000"/>
<text x="992.5" y="402.5" font-size="11" fill="#000">1.21800</text>
<rect x="988" y="420" width="4" height="1" fill="#FF0000"/>
<text x="992.5" y="424.5" font-size="11" fill="#000">1.21750</text>
<rect x="988" y="441" width="4" height="1" fill="#FF0000"/>
<text x="992.5" y="445.5" font-size="11" fill="#000">1.21700</text>
<rect x="988" y="463" width="4" height="1" fill="#FF0000"/>
<text x="992.5" y="467.5" font-size="11" fill="#000">1.21650</text>
<rect x="988" y="485" width="4" height="1" fill="#FF0000"/>
<text x="992.5" y="489.5" font-size="11" fill="#000">1.21600</text>
<rect x="988" y="507" width="4" height="1" fill="#FF0000"/>
<text x="992.5" y="511.5" font-size="11" fill="#000">1.21550</text>
<rect x="988" y="528" width="4" height="1" fill="#FF0000"/>
<text x="992.5" y="532.5" font-size="11" fill="#000">1.21500</text>
<rect x="988" y="550" width="4" height="1" fill="#FF0000"/>
<text x="992.5" y="554.5" font-size="11" fill="#000">1.21450</text>
<rect x="988" y="572" width="4" height="1" fill="#FF0000"/>
<text x="992.5" y="576.5" font-size="11" fill="#000">1.21400</text>
<rect x="988" y="594" width="4" height="1" fill="#FF0000"/>
<text x="992.5" y="598.5" font-size="11" fill="#000">1.21350</text>
<rect x="988" y="615" width="4" height="1" fill="#FF0000"/>
<text x="992.5" y="619.5" font-size="11" fill="#000">1.21300</text>
<rect x="988" y="637" width="4" height="1" fill="#FF0000"/>
<text x="992.5" y="641.5" font-size="11" fill="#000">1.21250</text>
<rect x="988" y="659" width="4" height="1" fill="#FF0000"/>
<text x="992.5" y="663.5" font-size="11" fill="#000">1.21200</text>
<rect x="990" y="594" width="45" height="13" fill="#F0F0F0"/>
<rect x="990.5" y="594.5" width="44" height="12" fill="none" stroke="#FF0000" stroke-width="1"/>
<text x="992.5" y="605" font-size="11" fill="#0000FF">1.21335</text>
<rect x="37" y="668" width="1" height="2" fill="#FF0000"/>
<text x="36.5" y="682" text-anchor="middle" font-size="11" fill="#000">31</text>
<rect x="68" y="668" width="1" height="2" fill="#FF0000"/>
<text x="67.5" y="682" text-anchor="middle" font-size="11" fill="#000">07</text>
<rect x="99" y="668" width="1" height="2" fill="#FF0000"/>
<text x="98.5" y="682" text-anchor="middle" font-size="11" fill="#000">14</text>
<rect x="131" y="668" width="1" height="2" fill="#FF0000"/>
<text x="130.5" y="682" text-anchor="middle" font-size="11" fill="#000">21</text>
<rect x="162" y="668" width="1" height="2" fill="#FF0000"/>
<text x="161.5" y="682" text-anchor="middle" font-size="11" fill="#000">28</text>
<rect x="193" y="668" width="1" height="2" fill="#FF0000"/>
<text x="192.5" y="682" text-anchor="middle" font-size="11" fill="#000">05</text>
<rect x="225" y="668" width="1" height="2" fill="#FF0000"/>
<text x="224.5" y="682" text-anchor="middle" font-size="11" fill="#000">12</text>
<rect x="256" y="668" width="1" height="2" fill="#FF0000"/>
<text x="255.5" y="682" text-anchor="middle" font-size="11" fill="#000">19</text>
<rect x="287" y="668" width="1" height="2" fill="#FF0000"/>
<text x="286.5" y="682" text-anchor="middle" font-size="11" fill="#000">26</text>
<rect x="318" y="668" width="1" height="2" fill="#FF0000"/>
<text x="317.5" y="682" text-anchor="middle" font-size="11" fill="#000">02</text>
<rect x="350" y="668" width="1" height="2" fill="#FF0000"/>
<text x="349.5" y="682" text-anchor="middle" font-size="11" fill="#000">09</text>
<rect x="381" y="668" width="1" height="2" fill="#FF0000"/>
<text x="380.5" y="682" text-anchor="middle" font-size="11" fill="#000">16</text>
<rect x="412" y="668" width="1" height="2" fill="#FF0000"/>
<text x="411.5" y="682" text-anchor="middle" font-size="11" fill="#000">23</text>
<rect x="444" y="668" width="1" height="2" fill="#FF0000"/>
<text x="443.5" y="682" text-anchor="middle" font-size="11" fill="#000">30</text>
<rect x="475" y="668" width="1" height="2" fill="#FF0000"/>
<text x="474.5" y="682" text-anchor="middle" font-size="11" fill="#000">07</text>
<rect x="506" y="668" width="1" height="2" fill="#FF0000"/>
<text x="505.5" y="682" text-anchor="middle" font-size="11" fill="#000">14</text>
<rect x="538" y="668" width="1" height="2" fill="#FF0000"/>
<text x="537.5" y="682" text-anchor="middle" font-size="11" fill="#000">21</text>
<rect x="569" y="668" width="1" height="2" fill="#FF0000"/>
<text x="568.5" y="682" text-anchor="middle" font-size="11" fill="#000">28</text>
<rect x="600" y="668" width="1" height="2" fill="#FF0000"/>
<text x="599.5" y="682" text-anchor="middle" font-size="11" fill="#000">04</text>
<rect x="631" y="668" width="1" height="2" fill="#FF0000"/>
<text x="630.5" y="682" text-anchor="middle" font-size="11" fill="#000">11</text>
<rect x="667" y="668" width="1" height="2" fill="#FF0000"/>
<text x="666.5" y="682" text-anchor="middle" font-size="11" fill="#000">18</text>
<rect x="698" y="668" width="1" height="2" fill="#FF0000"/>
<text x="697.5" y="682" text-anchor="middle" font-size="11" fill="#000">25</text>
<rect x="761" y="668" width="1" height="2" fill="#FF0000"/>
<text x="760.5" y="682" text-anchor="middle" font-size="11" fill="#000">08</text>
<rect x="792" y="668" width="1" height="2" fill="#FF0000"/>
<text x="791.5" y="682" text-anchor="middle" font-size="11" fill="#000">15</text>
<rect x="824" y="668" width="1" height="2" fill="#FF0000"/>
<text x="823.5" y="682" text-anchor="middle" font-size="11" fill="#000">22</text>
<rect x="855" y="668" width="1" height="2" fill="#FF0000"/>
<text x="854.5" y="682" text-anchor="middle" font-size="11" fill="#000">29</text>
<rect x="886" y="668" width="1" height="2" fill="#FF0000"/>
<text x="885.5" y="682" text-anchor="middle" font-size="11" fill="#000">06</text>
<rect x="917" y="668" width="1" height="2" fill="#FF0000"/>
<text x="916.5" y="682" text-anchor="middle" font-size="11" fill="#000">13</text>
<rect x="949" y="668" width="1" height="2" fill="#FF0000"/>
<text x="948.5" y="682" text-anchor="middle" font-size="11" fill="#000">20</text>
<text x="12" y="697" font-size="11" fill="#000" textLength="49" lengthAdjust="spacingAndGlyphs">Mar/31/14</text>
<text x="192.5" y="697" text-anchor="middle" font-size="11" fill="#000">May/05</text>
<text x="317.5" y="697" text-anchor="middle" font-size="11" fill="#000">Jun/02</text>
<text x="474.5" y="697" text-anchor="middle" font-size="11" fill="#000">Jul/07</text>
<text x="599.5" y="697" text-anchor="middle" font-size="11" fill="#000">Aug/04</text>
<text x="760.5" y="697" text-anchor="middle" font-size="11" fill="#000">Sep/08</text>
<text x="885.5" y="697" text-anchor="middle" font-size="11" fill="#000">Oct/06</text>
</svg>
<!-- status bar -->
<div class="abs" style="left:12px;top:714px;width:10px;height:10px;background:#3B69A8;border:1px solid #2E5A94"></div>
<div class="abs" style="left:26px;top:707px;width:1px;height:23px;background:#808080"></div>
<div class="abs" style="left:30px;top:709px;width:148px;height:20px;background:#FFFFFF;border:1px solid #A8A8A8;border-top-color:#8C8C8C"></div>
<svg class="abs" style="left:30px;top:709px" width="20" height="22"><circle cx="10" cy="8.5" r="3.2" stroke="#404040" stroke-width="1.2" fill="none"/><path d="M7.7 10.8l-4.2 4" stroke="#404040" stroke-width="1.6"/><path d="M10 15.5h1M12 15.5h1M14 15.5h1" stroke="#202020" stroke-width="1.2"/></svg>
<span class="abs" style="left:51px;top:713px;font-size:11px;color:#707070;line-height:14px;white-space:nowrap">Search for instrument</span>
<div class="abs" style="left:198px;top:708px;width:1px;height:22px;background:#808080"></div>
<span class="abs" style="left:202px;top:713px;font-size:11.8px;font-weight:bold;color:#111;line-height:14px;white-space:nowrap">11 Aug 2014 17:29:36 EDT</span>
</body></html>
